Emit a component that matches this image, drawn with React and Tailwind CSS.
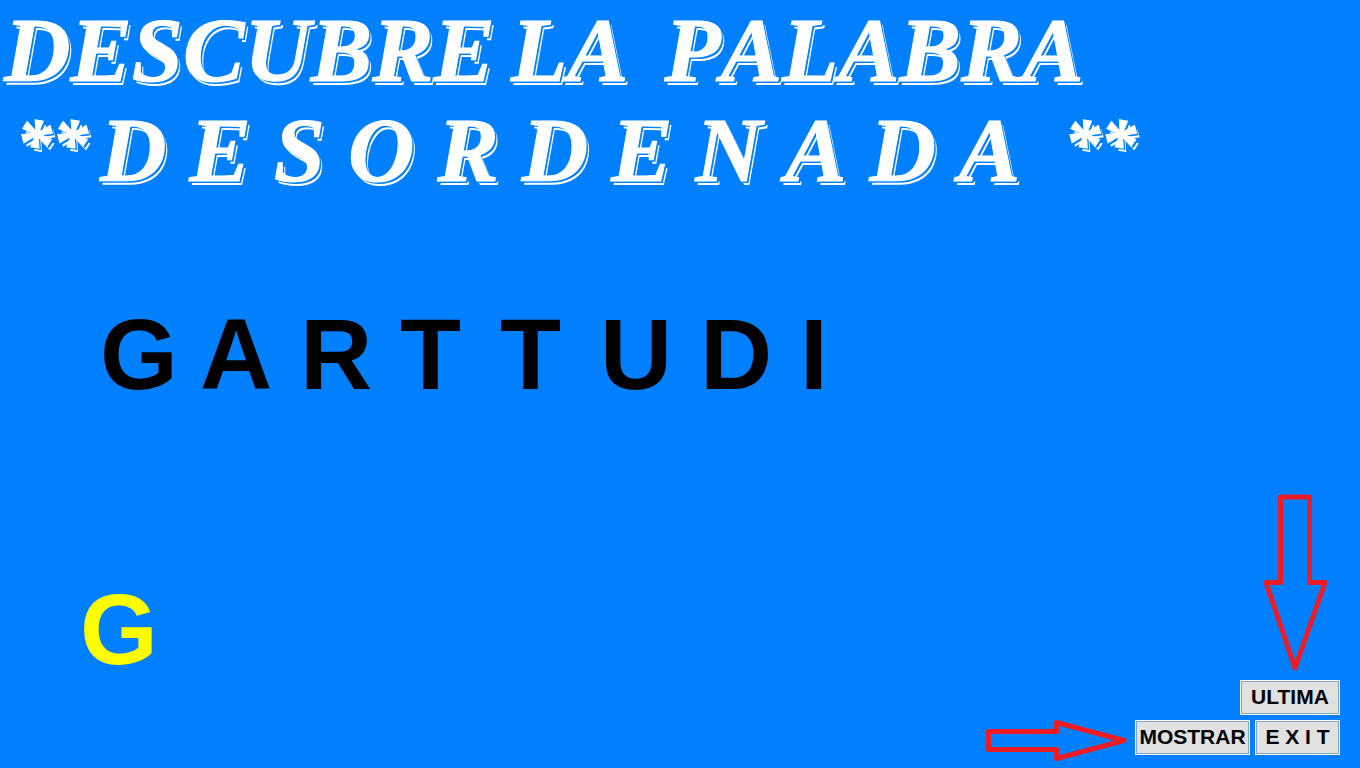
import { useState } from 'react';

const WORD = 'GRATITUD';
const SCRAMBLED = ['G', 'A', 'R', 'T', 'T', 'U', 'D', 'I'];

function GameButton({ children, className, onClick }) {
  return (
    <button
      type="button"
      onClick={onClick}
      className={`h-[35px] border border-white bg-[#e1e1e1] text-[21px] leading-[28px] font-bold text-black whitespace-nowrap outline outline-1 -outline-offset-2 outline-[#7fa6c4] pb-[2px] ${className}`}
    >
      {children}
    </button>
  );
}

function ArrowDown() {
  return (
    <svg width="66" height="180" viewBox="0 0 66 180" fill="none" stroke="#ed1c24" strokeWidth="5" strokeLinejoin="round" aria-hidden="true">
      <path d="M18.5 5H47.5V90.5H63L33 176L4 90.5H18.5Z" />
    </svg>
  );
}

function ArrowRight() {
  return (
    <svg width="144" height="42" viewBox="0 0 144 42" fill="none" stroke="#ed1c24" strokeWidth="5" strokeLinejoin="round" aria-hidden="true">
      <path d="M2.5 11.5H70.5V2.5L138 20.5L70.5 38.5V29.5H2.5Z" />
    </svg>
  );
}

function App() {
  const [shown, setShown] = useState(1);

  const showNext = () => {
    setShown((prev) => Math.min(prev + 1, WORD.length));
  };

  const showAll = () => {
    setShown(WORD.length);
  };

  return (
    <main className="flex min-h-screen flex-col bg-[#0080ff] font-['Liberation_Sans',Arial,sans-serif]">
      <h1 className="pl-1 font-['Liberation_Serif','Times_New_Roman',serif] text-[92px] leading-[100px] font-bold italic whitespace-nowrap text-white [font-kerning:none] [-webkit-text-stroke:1px_#ffffff] [text-shadow:2px_2px_0_#0080ff,3px_4px_0_#ffffff]">
        <span className="flex gap-4">
          <span>DESCUBRE</span>
          <span>LA</span>
          <span className="ml-5">PALABRA</span>
        </span>
        <span className="flex pl-3">
          <span className="w-21 text-[72px] leading-[88px]">**</span>
          <span className="mr-11">D E S O R D E N A D A</span>
          <span className="text-[72px] leading-[88px]">**</span>
        </span>
      </h1>

      <div className="mt-26 grid grid-cols-[repeat(8,100px)] pl-25 text-[100px] leading-[100px] font-bold text-black">
        {SCRAMBLED.map((letter, i) => (
          <span key={i}>{letter}</span>
        ))}
      </div>

      <div className="mt-auto flex items-start justify-between pt-16 pr-5 pb-[6px] pl-20">
        <output className="mt-[87px] text-[100px] leading-[100px] font-bold text-[#ffff00]">
          {WORD.slice(0, shown)}
        </output>

        <div className="flex flex-col items-end">
          <div className="mb-2 pr-3">
            <ArrowDown />
          </div>
          <GameButton className="mb-[5px] w-[100px]" onClick={showAll}>
            ULTIMA
          </GameButton>
          <div className="flex items-start gap-[5px]">
            <ArrowRight />
            <GameButton className="w-[115px]" onClick={showNext}>
              MOSTRAR
            </GameButton>
            <GameButton className="w-[85px]">E X I T</GameButton>
          </div>
        </div>
      </div>
    </main>
  );
}

export default App;
